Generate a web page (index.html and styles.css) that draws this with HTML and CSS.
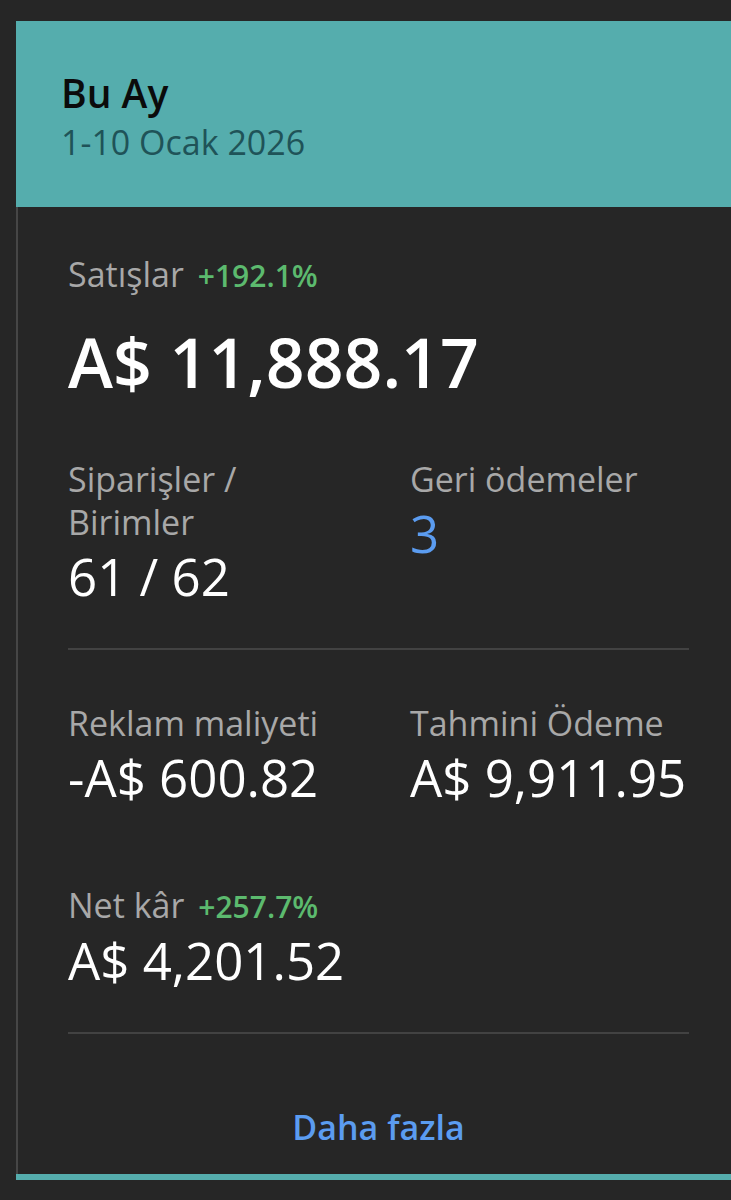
FILE: index.html
```html
<!DOCTYPE html>
<html lang="tr">

<head>
    <meta charset="UTF-8">
    <meta name="viewport" content="width=device-width, initial-scale=1.0">
    <title>Bu Ay</title>
    <link rel="stylesheet" href="styles.css">
</head>

<body>
    <div class="card">
        <div class="card-header">
            <div class="title">Bu Ay</div>
            <div class="period">1-10 Ocak 2026</div>
        </div>

        <div class="card-body">
            <div class="label-row sales-label">
                <span class="label">Satışlar</span>
                <span class="change">+192.1%</span>
            </div>
            <div class="total">A$ 11,888.17</div>

            <div class="stats orders">
                <div class="stat">
                    <div class="label">Siparişler /<br>Birimler</div>
                    <div class="value">61 / 62</div>
                </div>
                <div class="stat">
                    <div class="label">Geri ödemeler</div>
                    <div class="value link">3</div>
                </div>
            </div>

            <hr class="divider">

            <div class="stats costs">
                <div class="stat">
                    <div class="label">Reklam maliyeti</div>
                    <div class="value">-A$ 600.82</div>
                </div>
                <div class="stat">
                    <div class="label">Tahmini Ödeme</div>
                    <div class="value">A$ 9,911.95</div>
                </div>
            </div>

            <div class="stat profit">
                <div class="label-row">
                    <span class="label">Net kâr</span>
                    <span class="change">+257.7%</span>
                </div>
                <div class="value">A$ 4,201.52</div>
            </div>

            <hr class="divider">

            <div class="more">
                <a href="#">Daha fazla</a>
            </div>
        </div>
    </div>
</body>

</html>
```

FILE: styles.css
```css
body {
    margin: 0;
    background-color: #262626;
    font-family: "Open Sans", "Noto Sans", sans-serif;
    color: #ffffff;
}

.card {
    margin: 21px 0 0 16px;
    height: 1153px;
    display: flex;
    flex-direction: column;
    border-bottom: 6px solid #55adad;
}

.card-header {
    background-color: #55adad;
    height: 186px;
    box-sizing: border-box;
    padding: 49px 0 0 45px;
}

.title {
    font-size: 39px;
    font-weight: 600;
    line-height: 46px;
    color: #0b0b0b;
}

.period {
    font-size: 34px;
    line-height: 52px;
    color: #1f5358;
}

.card-body {
    flex: 1;
    border-left: 2px solid #464646;
    padding: 46px 42px 0 50px;
}

.label {
    font-size: 34px;
    line-height: 43px;
    color: #a8a8a8;
}

.label-row {
    display: flex;
    align-items: baseline;
    gap: 14px;
    line-height: 40px;
}

.change {
    font-size: 30px;
    font-weight: 600;
    color: #5cba6e;
}

.total {
    font-size: 68px;
    font-weight: 600;
    line-height: 80px;
    margin-top: 26px;
}

.stats {
    display: grid;
    grid-template-columns: 342px 1fr;
}

.orders {
    margin-top: 56px;
}

.value {
    font-size: 51px;
    line-height: 56px;
    margin-top: 4px;
}

.value.link {
    color: #5b9cf0;
}

.divider {
    border: none;
    height: 2px;
    background-color: #424242;
    margin: 44px 0 0 0;
}

.costs {
    margin-top: 52px;
}

.profit {
    margin-top: 79px;
}

.profit .label-row {
    line-height: 43px;
}

.more {
    text-align: center;
    margin-top: 70px;
}

.more a {
    font-size: 34px;
    font-weight: 600;
    color: #5b9cf0;
    text-decoration: none;
}
```
